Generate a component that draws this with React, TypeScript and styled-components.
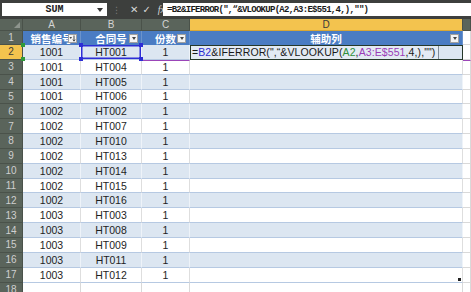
import React from "react";
import styled, { createGlobalStyle } from "styled-components";

const GlobalStyle = createGlobalStyle`
  html, body { margin: 0; padding: 0; background: #fff; overflow: hidden; }
  #root { width: 471px; height: 292px; overflow: hidden; }
`;

const HEAD_BG = "#5a645b";
const HEAD_LINE = "#4a524a";
const ACTIVE_BG = "#f3c34e";
const BAND = "#dce6f1";

const rows: [string, string][] = [
  ["1001", "HT001"], ["1001", "HT004"], ["1001", "HT005"], ["1001", "HT006"],
  ["1002", "HT002"], ["1002", "HT007"], ["1002", "HT010"], ["1002", "HT013"],
  ["1002", "HT014"], ["1002", "HT015"], ["1002", "HT016"], ["1003", "HT003"],
  ["1003", "HT008"], ["1003", "HT009"], ["1003", "HT011"], ["1003", "HT012"],
];

const Page = styled.div`
  width: 471px;
  height: 292px;
  overflow: hidden;
  background: #fff;
`;

// formula bar
const FormulaBar = styled.div`
  height: 19px;
  box-sizing: border-box;
  padding: 3px 0 3px 2px;
  background: #3d3f3d;
  display: flex;
  align-items: stretch;
  font-family: "Liberation Mono", "DejaVu Sans Mono", monospace;
`;

const NameBox = styled.div`
  width: 105px;
  background: #fff;
  position: relative;
  display: flex;
  align-items: center;
  justify-content: center;
  font-size: 10px;
  font-weight: bold;
  color: #222;
`;

const Caret = styled.span`
  position: absolute;
  right: 4px;
  top: 5px;
  border-left: 3px solid transparent;
  border-right: 3px solid transparent;
  border-top: 4px solid #333;
`;

const BarTools = styled.div`
  width: 56px;
  display: flex;
  align-items: center;
  gap: 4px;
  padding-left: 5px;
  box-sizing: border-box;
  color: #d8d8d8;
  font-family: "DejaVu Sans", sans-serif;
  font-size: 10px;
`;

const Grip = styled.span`
  color: #7a7a7a;
  font-size: 9px;
  margin-right: 5px;
`;

const Fx = styled.span`
  font-family: "Liberation Serif", serif;
  font-style: italic;
  font-size: 10px;
  margin-left: 3px;
`;

const FormulaInput = styled.div`
  flex: 1;
  background: #fff;
  display: flex;
  align-items: center;
  padding-left: 4px;
  font-size: 9px;
  letter-spacing: -0.72px;
  font-weight: bold;
  color: #1a1a1a;
  white-space: nowrap;
`;

// sheet grid
const Sheet = styled.div`
  display: grid;
  grid-template-columns: 23px 58px 61px 48px 273px 1fr;
  grid-template-rows: 12px 14px repeat(17, 14.85px);
  font-family: "Liberation Sans", Arial, sans-serif;
`;

const Cell = styled.div`
  position: relative;
  box-sizing: border-box;
  display: flex;
  align-items: center;
  justify-content: center;
  overflow: visible;
  white-space: nowrap;
`;

const Corner = styled(Cell)`
  background: ${HEAD_BG};
  border-right: 1px solid ${HEAD_LINE};
  border-bottom: 1px solid ${HEAD_LINE};
  &::after {
    content: "";
    position: absolute;
    right: 2px;
    bottom: 2px;
    border-left: 6px solid transparent;
    border-bottom: 6px solid #8d948d;
  }
`;

const ColHead = styled(Cell)<{ $active?: boolean }>`
  background: ${(p) => (p.$active ? ACTIVE_BG : HEAD_BG)};
  color: ${(p) => (p.$active ? "#3a3a3a" : "#d4d4d4")};
  border-right: 1px solid ${HEAD_LINE};
  border-bottom: 1px solid ${(p) => (p.$active ? "#d9a734" : HEAD_LINE)};
  font-size: 10px;
`;

const RowHead = styled(Cell)<{ $active?: boolean }>`
  background: ${(p) => (p.$active ? ACTIVE_BG : HEAD_BG)};
  color: ${(p) => (p.$active ? "#3a3a3a" : "#cfcfcf")};
  border-right: 1px solid ${HEAD_LINE};
  border-bottom: 1px solid ${HEAD_LINE};
  font-size: 10px;
  overflow: hidden;
`;

const HeadCell = styled(Cell)`
  background: #4a7cc3;
  color: #fff;
  font-family: "Noto Sans CJK SC", sans-serif;
  font-weight: bold;
  font-size: 10.5px;
  border-right: 1px solid #6b93cc;
  overflow: hidden;
`;

const FilterButton = styled.span`
  position: absolute;
  right: 3px;
  top: 3px;
  width: 9px;
  height: 9px;
  box-sizing: border-box;
  background: #f4f4f4;
  border: 1px solid #a0a0a0;
  display: flex;
  align-items: center;
  justify-content: center;
`;

const Tri = styled.span`
  border-left: 2.5px solid transparent;
  border-right: 2.5px solid transparent;
  border-top: 3px solid #444;
`;

const DataCell = styled(Cell)<{ $band: boolean; $purpleTop?: boolean }>`
  background: ${(p) => (p.$band ? BAND : "#fff")};
  border-bottom: 1px solid #b6c9e2;
  border-right: 1px solid ${(p) => (p.$band ? "#eef3f9" : "#dedede")};
  border-top: ${(p) => (p.$purpleTop ? "1px solid #9b45b8" : "none")};
  color: #1e1e1e;
  font-size: 10.5px;
`;

const PlainCell = styled(Cell)<{ $purpleTop?: boolean }>`
  background: #fff;
  border-right: 1px solid #d9d9d9;
  border-bottom: 1px solid #d9d9d9;
  border-top: ${(p) => (p.$purpleTop ? "1px solid #9b45b8" : "none")};
`;

const SelectedCell = styled(DataCell)`
  box-shadow: inset 0 0 0 1.5px #2d2dd6;
`;

const Handle = styled.span<{ $color: string; $x: "left" | "right"; $y: "top" | "bottom" }>`
  position: absolute;
  width: 4px;
  height: 4px;
  background: ${(p) => p.$color};
  ${(p) => p.$x}: -2px;
  ${(p) => p.$y}: -2px;
  z-index: 2;
`;

const EditCell = styled(Cell)`
  justify-content: flex-start;
  align-items: stretch;
  background: ${BAND};
  border: 1.5px solid #26382a;
  z-index: 1;
`;

const Editor = styled.div`
  display: flex;
  align-items: center;
  padding: 0 3px 0 1px;
  background: #e3eaf3;
  border-right: 1px solid #7f8a97;
  font-size: 10.5px;
  letter-spacing: 0.1px;
  color: #1a1a1a;
`;

const Ref = styled.span<{ $color: string }>`
  color: ${(p) => p.$color};
`;

const ResizeGrip = styled.span`
  position: absolute;
  right: 1px;
  bottom: 1px;
  width: 3px;
  height: 3px;
  background: #222;
`;

function Filter({ sorted }: { sorted?: boolean }) {
  return (
    <FilterButton>
      {sorted ? (
        <svg width="7" height="7" viewBox="0 0 7 7">
          <path d="M0.5 2 L3 2 L1.75 4 Z" fill="#444" />
          <path d="M5 0.5 V6" stroke="#444" strokeWidth="1" />
          <path d="M3.8 4.6 L5 6.2 L6.2 4.6" stroke="#444" strokeWidth="0.9" fill="none" />
        </svg>
      ) : (
        <Tri />
      )}
    </FilterButton>
  );
}

export default function App() {
  return (
    <Page>
      <GlobalStyle />
      <FormulaBar>
        <NameBox>
          SUM
          <Caret />
        </NameBox>
        <BarTools>
          <Grip>⋮</Grip>
          <span>✕</span>
          <span>✓</span>
          <Fx>fx</Fx>
        </BarTools>
        <FormulaInput>=B2&amp;IFERROR(",“&amp;VLOOKUP(A2,A3:E$551,4,),"")</FormulaInput>
      </FormulaBar>

      <Sheet>
        <Corner />
        <ColHead>A</ColHead>
        <ColHead>B</ColHead>
        <ColHead>C</ColHead>
        <ColHead $active>D</ColHead>
        <ColHead />

        <RowHead>1</RowHead>
        <HeadCell>
          销售编号
          <Filter sorted />
        </HeadCell>
        <HeadCell>
          合同号
          <Filter />
        </HeadCell>
        <HeadCell>
          份数
          <Filter />
        </HeadCell>
        <HeadCell>
          辅助列
          <Filter />
        </HeadCell>
        <PlainCell />

        {rows.map(([id, no], i) => {
          const r = i + 2;
          const band = r % 2 === 0;
          if (r === 2) {
            return (
              <React.Fragment key={r}>
                <RowHead $active>2</RowHead>
                <DataCell $band>
                  {id}
                  <Handle $color="#2f9a3a" $x="left" $y="top" />
                  <Handle $color="#2f9a3a" $x="left" $y="bottom" />
                </DataCell>
                <SelectedCell $band>
                  {no}
                  <Handle $color="#2d2dd6" $x="left" $y="top" />
                  <Handle $color="#2d2dd6" $x="right" $y="top" />
                  <Handle $color="#2d2dd6" $x="left" $y="bottom" />
                  <Handle $color="#2d2dd6" $x="right" $y="bottom" />
                </SelectedCell>
                <DataCell $band>1</DataCell>
                <EditCell>
                  <Editor>
                    =<Ref $color="#2a2ad0">B2</Ref>&amp;IFERROR(",“&amp;VLOOKUP(
                    <Ref $color="#2f8f3a">A2</Ref>,<Ref $color="#9b3cb8">A3:E$551</Ref>,4,),"")
                  </Editor>
                </EditCell>
                <PlainCell />
              </React.Fragment>
            );
          }
          return (
            <React.Fragment key={r}>
              <RowHead>{r}</RowHead>
              <DataCell $band={band}>{id}</DataCell>
              <DataCell $band={band}>{no}</DataCell>
              <DataCell $band={band} $purpleTop={r === 3}>
                1
              </DataCell>
              <DataCell $band={band}>{r === 17 && <ResizeGrip />}</DataCell>
              <PlainCell $purpleTop={r === 3} />
            </React.Fragment>
          );
        })}

        <RowHead>18</RowHead>
        <PlainCell />
        <PlainCell />
        <PlainCell />
        <PlainCell />
        <PlainCell />
      </Sheet>
    </Page>
  );
}
